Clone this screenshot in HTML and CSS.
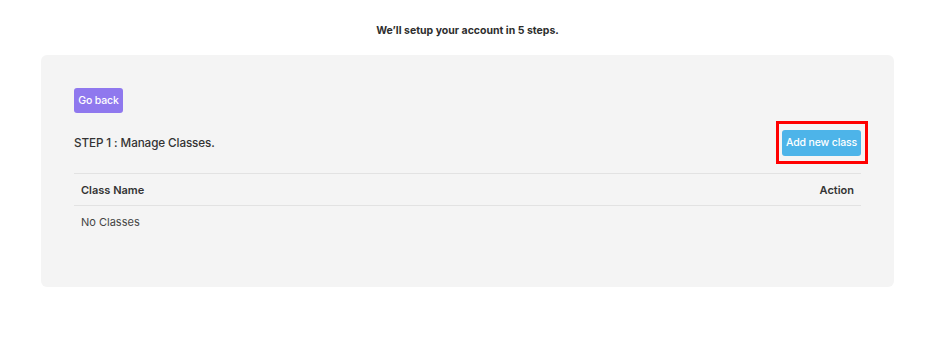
FILE: index.html
```html
<!DOCTYPE html>
<html>
<head>
<meta charset="utf-8">
<link rel="stylesheet" href="styles.css">
</head>
<body>
<div class="page">
  <h1 class="intro">We’ll setup your account in 5 steps.</h1>
  <div class="card">
    <button class="btn btn-back">Go back</button>
    <div class="step-row">
      <h2 class="step-title">STEP 1 : Manage Classes.</h2>
      <div class="highlight">
        <button class="btn btn-add">Add new class</button>
      </div>
    </div>
    <table class="classes">
      <thead>
        <tr><th class="col-name">Class Name</th><th class="col-action">Action</th></tr>
      </thead>
      <tbody>
        <tr><td colspan="2">No Classes</td></tr>
      </tbody>
    </table>
  </div>
</div>
</body>
</html>
```

FILE: styles.css
```css
* { box-sizing: border-box; }
html, body { margin: 0; padding: 0; background: #ffffff; }
body {
  font-family: "Inter", "Noto Sans", sans-serif;
  color: #333333;
}
.page {
  padding: 24px 37px 0 41px;
}
.intro {
  margin: 0 0 17px;
  text-align: center;
  font-size: 10.5px;
  font-weight: 700;
  line-height: 14px;
  color: #2e2e2e;
}
.card {
  background: #f4f4f4;
  border-radius: 6px;
  padding: 33px 33px 48px;
  height: 232px;
}
.btn {
  border: 0;
  border-radius: 3px;
  color: #ffffff;
  font-family: inherit;
  font-size: 10.5px;
  font-weight: 500;
  letter-spacing: -0.15px;
  line-height: 14px;
  cursor: pointer;
}
.btn-back {
  display: block;
  background: #8f78ee;
  width: 49px;
  height: 25px;
  padding: 0;
}
.step-row {
  display: flex;
  justify-content: space-between;
  align-items: center;
  margin-top: 8px;
  margin-right: -7px;
}
.step-title {
  margin: 0;
  font-size: 11.7px;
  font-weight: 500;
  letter-spacing: -0.1px;
  color: #333;
}
.highlight {
  border: 3px solid #ff0000;
  padding: 6px 4px 5px 3px;
}
.btn-add {
  display: block;
  background: #4db4e9;
  height: 26px;
  width: 79px;
  padding: 0;
}
.classes {
  width: 100%;
  border-collapse: collapse;
  margin-top: 9px;
  font-size: 11px;
}
.classes th, .classes td {
  padding: 0 7px;
  height: 32px;
  border-top: 1px solid #e2e2e2;
  text-align: left;
}
.classes th {
  font-weight: 600;
  color: #333;
  border-bottom: 1px solid #e2e2e2;
}
.classes th.col-action { text-align: right; }
.classes td {
  border-top: 0;
  color: #444;
  height: 33px;
}
```
